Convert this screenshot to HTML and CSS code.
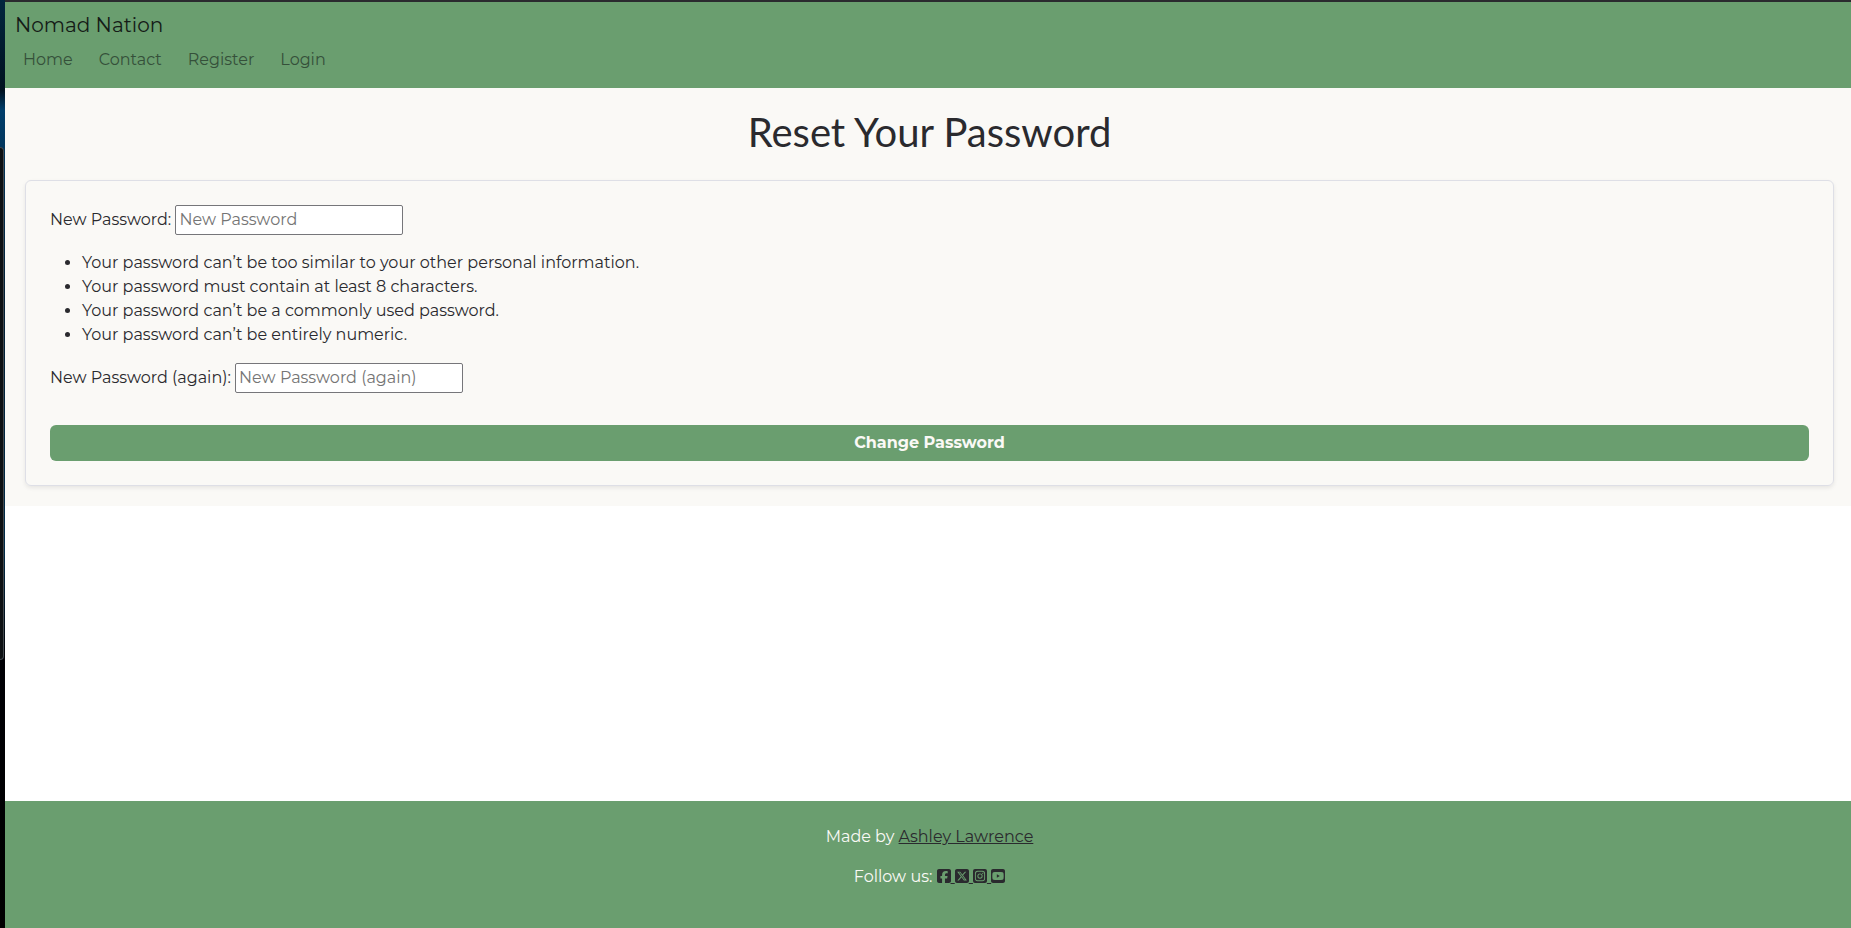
FILE: index.html
```html
<!DOCTYPE html>
<html lang="en">
<head>
<meta charset="utf-8">
<meta name="viewport" content="width=device-width, initial-scale=1">
<title>Reset Your Password</title>
<link rel="stylesheet" href="styles.css">
</head>
<body>
<div class="desktop-edge" aria-hidden="true"><div class="back-window"></div></div>
<div class="page">
  <header class="site-header">
    <a class="brand" href="#">Nomad Nation</a>
    <nav class="nav">
      <a class="nav-link" href="#">Home</a>
      <a class="nav-link" href="#">Contact</a>
      <a class="nav-link" href="#">Register</a>
      <a class="nav-link" href="#">Login</a>
    </nav>
  </header>
  <main class="content">
    <h1 class="title">Reset Your Password</h1>
    <form class="card">
      <p class="field"><label for="password1">New Password:</label> <input class="input" type="password" id="password1" placeholder="New Password"></p>
      <ul class="hints">
        <li>Your password can’t be too similar to your other personal information.</li>
        <li>Your password must contain at least 8 characters.</li>
        <li>Your password can’t be a commonly used password.</li>
        <li>Your password can’t be entirely numeric.</li>
      </ul>
      <p class="field"><label for="password2">New Password (again):</label> <input class="input" type="password" id="password2" placeholder="New Password (again)"></p>
      <button class="submit" type="button">Change Password</button>
    </form>
  </main>
  <footer class="site-footer">
    <p class="footer-line">Made by <a class="footer-link" href="#">Ashley Lawrence</a></p>
    <p class="footer-line">Follow us:
      <a class="footer-link" href="#" aria-label="Facebook"><svg class="icon" viewBox="0 0 448 512"><path d="M64 32C28.700 32 0 60.700 0 96V416c0 35.300 28.700 64 64 64h98.200V334.200H109.400V256h52.800V222.300c0-87.100 39.400-127.500 125-127.500c16.200 0 44.200 3.200 55.700 6.400V172c-6-.6-16.500-1-29.600-1c-42 0-58.200 15.900-58.200 57.200V256h83.600l-14.400 78.200H255V480H384c35.300 0 64-28.700 64-64V96c0-35.300-28.700-64-64-64H64z"/></svg> </a><a class="footer-link" href="#" aria-label="X"><svg class="icon" viewBox="0 0 448 512"><path d="M64 32C28.700 32 0 60.700 0 96V416c0 35.300 28.700 64 64 64H384c35.300 0 64-28.700 64-64V96c0-35.300-28.700-64-64-64H64zm297.100 84L257.300 234.600 379.400 396H283.800L209 298.100 123.300 396H75.800l111-126.900L69.700 116h98l67.700 89.500L313.600 116h47.500zM323.300 367.600L153.400 142.900H125.100L296.900 367.600h26.300z"/></svg> </a><a class="footer-link" href="#" aria-label="Instagram"><svg class="icon" viewBox="0 0 448 512"><path fill-rule="evenodd" d="M64 32H384a64 64 0 0 1 64 64V416a64 64 0 0 1-64 64H64a64 64 0 0 1-64-64V96a64 64 0 0 1 64-64zM148 90a86 86 0 0 0-86 86V336a86 86 0 0 0 86 86H300a86 86 0 0 0 86-86V176a86 86 0 0 0-86-86H148zm4 30H296a60 60 0 0 1 60 60V332a60 60 0 0 1-60 60H152a60 60 0 0 1-60-60V180a60 60 0 0 1 60-60zM224 172a84 84 0 1 0 0 168 84 84 0 1 0 0-168zm0 30a54 54 0 1 1 0 108 54 54 0 1 1 0-108zM311 149a20 20 0 1 0 0 40 20 20 0 1 0 0-40z"/></svg> </a><a class="footer-link" href="#" aria-label="YouTube"><svg class="icon" viewBox="0 0 448 512"><path d="M282 256.200l-95.200-54.100V310.300L282 256.200zM384 32H64C28.700 32 0 60.700 0 96V416c0 35.300 28.700 64 64 64H384c35.300 0 64-28.700 64-64V96c0-35.300-28.700-64-64-64zm14.400 136.100c7.600 28.600 7.600 88.200 7.600 88.200s0 59.600-7.600 88.100c-4.200 15.800-16.500 27.700-32.200 31.900C337.900 384 224 384 224 384s-113.900 0-142.200-7.600c-15.700-4.200-28-16.100-32.200-31.900C42 315.900 42 256.300 42 256.300s0-59.700 7.600-88.200c4.200-15.800 16.500-28.200 32.200-32.400C110.100 128 224 128 224 128s113.900 0 142.200 7.700c15.700 4.200 28 16.600 32.200 32.400z"/></svg></a>
    </p>
  </footer>
</div>
</body>
</html>
```
FILE: styles.css
```css
* { box-sizing: border-box; }

body {
  margin: 0;
  min-height: 100vh;
  display: grid;
  grid-template-columns: 5px 1fr;
  color: #2a2a2e;
  font: 400 16px/24px Montserrat, Inter, "Open Sans", sans-serif;
}

.desktop-edge {
  padding-top: 147px;
  background: linear-gradient(#02263f 0, #00111f 90px, #003e6b 110px, #03355a 160px, #021f35 300px, #002c4a 550px, #000005 660px, #000 100%);
}

.back-window {
  height: 513px;
  width: 4px;
  border: solid #42484c;
  border-width: 1px 1px 1px 0;
  border-radius: 0 4px 4px 0;
  background: #0d1114;
}

.page {
  display: flex;
  flex-direction: column;
  border-top: 2px solid #2a2a2e;
  background: #fff;
}

.site-header {
  padding: 8px 10px;
  background: #6a9e6f;
}

.brand {
  display: block;
  width: max-content;
  color: #151b17;
  font-size: 20px;
  line-height: 30px;
  text-decoration: none;
}

.nav { display: flex; gap: 10px; }

.nav-link {
  padding: 8px;
  color: #35503a;
  text-decoration: none;
}

.content {
  padding: 20px 17px 20px 20px;
  background: #faf9f6;
}

.title {
  margin: 0 0 24px;
  font: 400 40px/48px Lato, sans-serif;
  text-align: center;
}

.card {
  padding: 24px;
  border: 1px solid #dedfe6;
  border-radius: 6px;
  box-shadow: 0 2px 4px rgb(0 0 0 / 8%);
}

.field { margin: 0 0 16px; }

.input {
  width: 228px;
  height: 30px;
  padding: 1px 3px 3px;
  border: 1px solid #76767a;
  border-radius: 2px;
  background: #fff;
  color: inherit;
  font: inherit;
}

.input::placeholder { color: #757575; opacity: 1; }

.hints { margin: 0 0 16px; padding-left: 32px; }

.submit {
  display: block;
  width: 100%;
  height: 36px;
  margin-top: 32px;
  padding: 6px 12px;
  border: 0;
  border-radius: 6px;
  background: #6a9e6f;
  color: #faf9f6;
  font: inherit;
  font-weight: 700;
}

.site-footer {
  margin-top: auto;
  padding: 24px 17px 23px 20px;
  background: #6a9e6f;
  color: #faf9f6;
  text-align: center;
}

.footer-line { margin: 0 0 16px; }

.footer-link { color: #2a2a2e; }

.icon {
  width: 14px;
  height: 16px;
  fill: currentColor;
  vertical-align: -2px;
}
```
